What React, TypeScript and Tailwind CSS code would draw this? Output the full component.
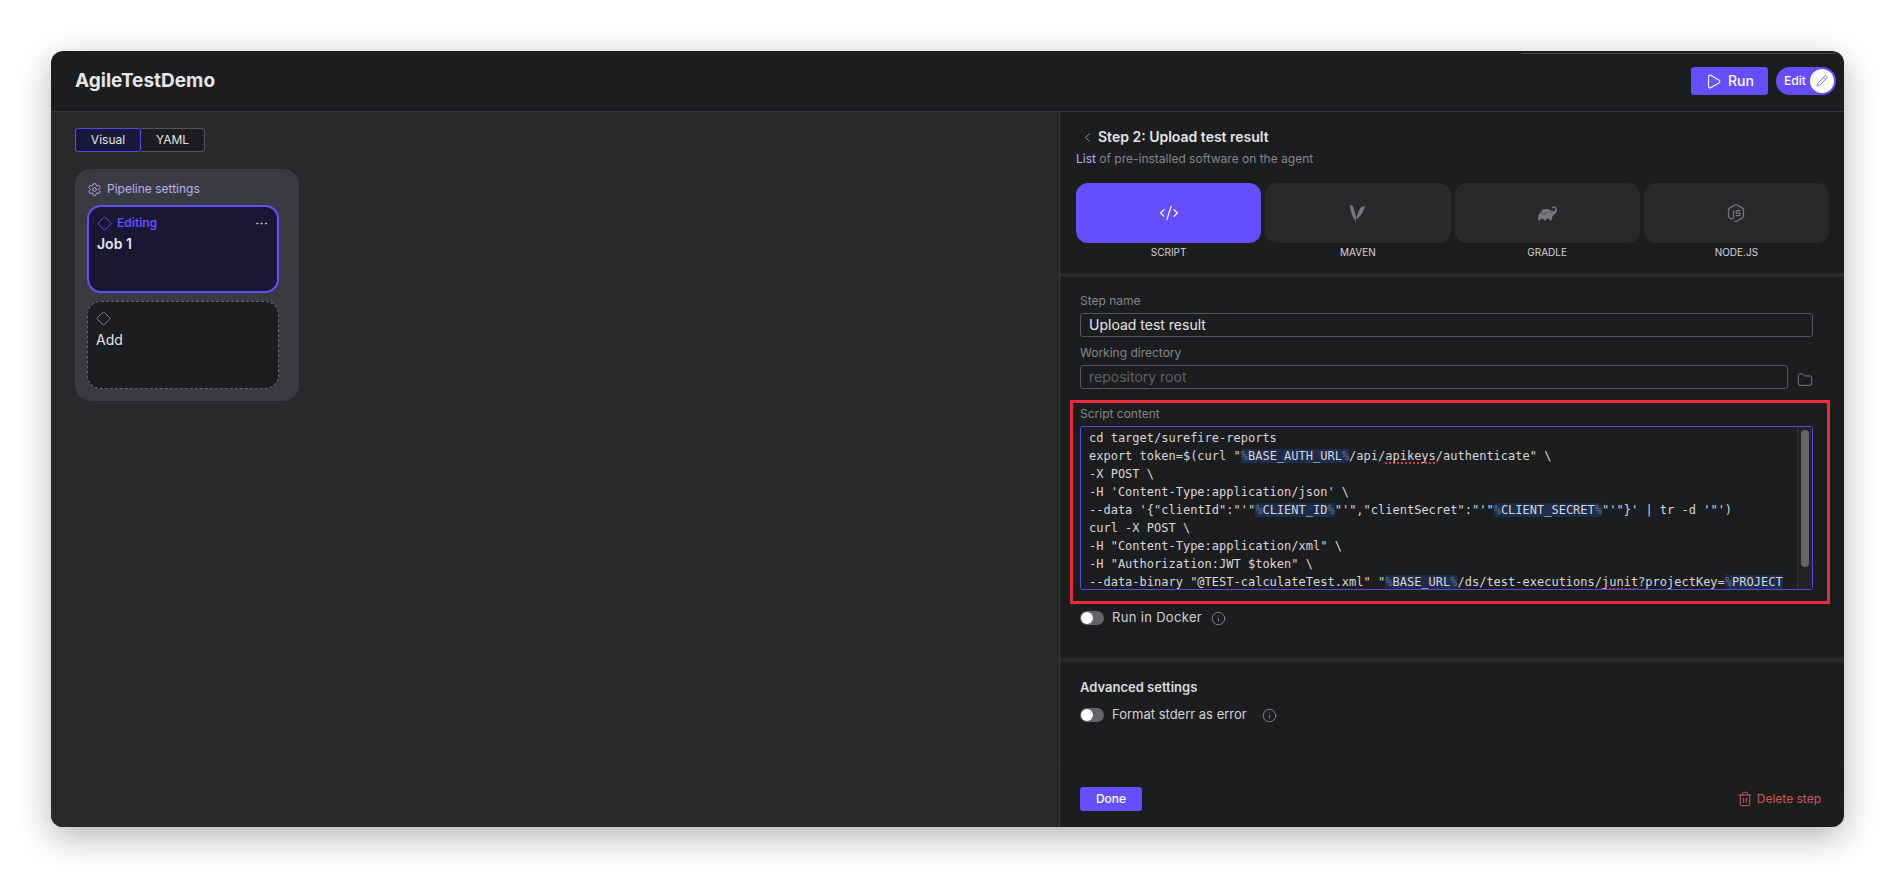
import {ReactNode} from "react";
import {ChevronLeft, CodeXml, Diamond, Ellipsis, Folder, Info, Pencil, Play, Settings, Trash2} from "lucide-react";
import {SiGradle} from "react-icons/si";
import {TbBrandNodejs} from "react-icons/tb";

function MavenIcon() {
  return (
    <svg width="17" height="18" viewBox="0 0 17 18" fill="#77777d">
      <path d="M1 1.5C2.6 1 3.8 1.6 4.4 3.2L7.2 13.5 6.6 16 5 15.6C3 11 1.4 6.5 1 1.5Z" />
      <path d="M15.8 2C14.2 1.8 12.6 2.4 11.3 4.2 9.6 6.8 8.4 10 7.6 13.6L7.4 15.6C11.4 12.6 14.6 8 15.8 2Z" />
      <path d="M6 15.5h1v2.5H6z" opacity="0.5" />
    </svg>
  );
}

function Toggle() {
  return (
    <span className="flex h-[14px] w-[24px] shrink-0 items-center rounded-full bg-[#63646a] pl-[1px]">
      <span className="size-[12px] rounded-full bg-white" />
    </span>
  );
}

function Label({children}: {children: ReactNode}) {
  return <div className="mb-[4px] h-4 text-xs leading-4 text-[#85868b]">{children}</div>;
}

function Var({name}: {name: string}) {
  return (
    <span className="bg-[#1d2d4b]">
      <span className="text-[#5d6f8c]">%</span>
      {name}
      <span className="text-[#5d6f8c]">%</span>
    </span>
  );
}

function Typo({children}: {children: ReactNode}) {
  return <span className="underline decoration-[#d43c3c] decoration-dotted decoration-2 underline-offset-2">{children}</span>;
}

const tabs = [
  {name: "SCRIPT", icon: <CodeXml size={20} strokeWidth={1.5} color="#fff" />, active: true},
  {name: "MAVEN", icon: <MavenIcon />},
  {name: "GRADLE", icon: <SiGradle size={19} color="#77777d" />},
  {name: "NODE.JS", icon: <TbBrandNodejs size={20} color="#77777d" strokeWidth={1.5} />},
];

export default function App() {
  return (
    <div className="h-[877px] w-[1895px] overflow-hidden bg-white pl-[51px] pt-[51px] font-['Inter',sans-serif]">
      <div className="relative flex h-[776px] w-[1793px] flex-col overflow-hidden rounded-[12px] bg-[#1c1d1f] text-[#e4e4e7] shadow-[0_10px_34px_rgba(0,0,0,0.3)]">
        <div className="absolute right-[8px] top-[2px] h-px w-[315px] bg-[#4a4b4f]" />

        <header className="flex h-[61px] shrink-0 items-center justify-between border-b border-[#36373a] pl-[24px] pr-[8px]">
          <h1 className="mt-[1px] text-[19px] font-bold text-[#e6e6e9]">AgileTestDemo</h1>
          <div className="flex items-center gap-2">
            <button className="flex h-[28px] w-[77px] items-center justify-center gap-[6px] rounded-[3px] bg-[#654eff] text-sm font-medium text-white">
              <Play size={17} strokeWidth={1.5} />
              Run
            </button>
            <div className="flex h-[28px] w-[60px] items-center justify-between rounded-full bg-[#654eff] pl-2 pr-[2px] text-xs font-medium text-white">
              Edit
              <span className="flex size-[24px] items-center justify-center rounded-full bg-white">
                <Pencil size={12} strokeWidth={1.5} color="#654eff" />
              </span>
            </div>
          </div>
        </header>

        <div className="flex min-h-0 flex-1">
          <main className="w-[1008px] shrink-0 bg-[#28292b] pl-[24px] pt-[16px]">
            <div className="flex h-[24px] w-[130px] text-xs">
              <button className="w-[66px] rounded-[3px] border border-[#5a45f0] bg-[#19173a] text-[#e4e4e7]">Visual</button>
              <button className="flex-1 rounded-r-[3px] border border-l-0 border-[#55565b] bg-[#1c1d1f] text-[#e4e4e7]">YAML</button>
            </div>

            <div className="mt-[17px] h-[232px] w-[224px] rounded-[16px] bg-[#3a3b40] pl-[12px] pr-[20px] pt-[12px]">
              <div className="flex h-4 items-center gap-[5px] text-xs text-[#b7adf8]">
                <Settings size={15} strokeWidth={1.5} />
                Pipeline settings
              </div>
              <div className="mt-[8px] h-[88px] rounded-[14px] border-2 border-[#654eff] bg-[#191733] pl-[8px] pr-[8px] pt-[8px]">
                <div className="flex items-center justify-between">
                  <div className="flex items-center gap-[5px] text-xs font-semibold text-[#654eff]">
                    <Diamond size={15} strokeWidth={1.5} />
                    Editing
                  </div>
                  <Ellipsis size={15} strokeWidth={1.5} color="#c9c9ce" />
                </div>
                <div className="mt-[3px] text-sm font-semibold leading-5 text-[#e6e6e9]">Job 1</div>
              </div>
              <div className="mt-[8px] h-[88px] rounded-[14px] border border-dashed border-[#66676c] bg-[#1c1d1f] pl-[8px] pt-[9px]">
                <Diamond size={15} strokeWidth={1.25} color="#a0a1a6" />
                <div className="mt-[4px] text-sm leading-5 text-[#e4e4e7]">Add</div>
              </div>
            </div>
          </main>

          <aside className="flex min-w-0 flex-1 flex-col border-l border-[#36373a]">
            <section className="h-[161px] shrink-0 pl-[16px] pr-[15px] pt-[15px]">
              <div className="flex h-5 items-center gap-[3px] pl-[4px] text-sm font-semibold text-[#e4e4e7]">
                <ChevronLeft size={15} strokeWidth={1.5} color="#9a9ba0" />
                Step 2: Upload test result
              </div>
              <p className="mt-[2px] text-xs leading-5 text-[#85868b]">
                <span className="text-[#b7adf8]">List</span> of pre-installed software on the agent
              </p>
              <div className="mt-[14px] grid grid-cols-4 gap-[4px]">
                {tabs.map((tab) => (
                  <div key={tab.name} className="flex flex-col items-center">
                    <div className={`flex h-[60px] w-full items-center justify-center rounded-[12px] ${tab.active ? "bg-[#654eff]" : "bg-[#28292b]"}`}>
                      {tab.icon}
                    </div>
                    <div className="mt-[1px] text-[10px] leading-4 text-[#d4d4d8]">{tab.name}</div>
                  </div>
                ))}
              </div>
            </section>

            <div className="h-[4px] shrink-0 bg-[#28292b]" />

            <section className="h-[381px] shrink-0 pl-[20px] pr-[31px] pt-[16px]">
              <Label>Step name</Label>
              <div className="flex h-[24px] items-center rounded-[3px] border border-[#55565b] px-2 text-sm text-[#e8e8ea]">Upload test result</div>
              <div className="mt-[8px]" />
              <Label>Working directory</Label>
              <div className="flex items-center gap-[9px]">
                <div className="flex h-[24px] flex-1 items-center rounded-[3px] border border-[#55565b] px-2 text-sm text-[#5f6065]">repository root</div>
                <Folder size={16} strokeWidth={1.25} color="#8a8b90" className="mt-[5px]" />
              </div>

              <div className="-ml-[10px] -mr-[17px] mt-[11px] h-[204px] border-[3px] border-[#ee2a3c] pb-[11px] pl-[7px] pr-[14px] pt-[3px]">
                <Label>Script content</Label>
                <div className="flex h-[164px] overflow-hidden rounded-[3px] border border-[#5a45f0]">
                  <pre className="min-w-0 flex-1 overflow-hidden whitespace-pre pl-2 pt-[2px] font-['DejaVu_Sans_Mono',monospace] text-xs leading-[18px] text-[#d8d8db]">
                    <div>cd target/surefire-reports</div>
                    <div>export token=$(curl "<Var name="BASE_AUTH_URL" />/api/<Typo>apikeys</Typo>/authenticate" \</div>
                    <div>-X POST \</div>
                    <div>-H 'Content-Type:application/json' \</div>
                    <div>--data '{"{"}"clientId":"'"<Var name="CLIENT_ID" />"'","clientSecret":"'"<Var name="CLIENT_SECRET" />"'"{"}"}' | tr -d '"')</div>
                    <div>curl -X POST \</div>
                    <div>-H "Content-Type:application/xml" \</div>
                    <div>-H "Authorization:JWT $token" \</div>
                    <div>--data-binary "@TEST-calculateTest.xml" "<Var name="BASE_URL" />/ds/test-executions/<Typo>junit</Typo>?projectKey=<span className="bg-[#1d2d4b]"><span className="text-[#5d6f8c]">%</span>PROJECT</span></div>
                  </pre>
                  <div className="w-[15px] shrink-0 border-l border-[#333438] bg-[#222325] pl-[3px] pt-[3px]">
                    <div className="h-[137px] w-[8px] rounded-full bg-[#646566]" />
                  </div>
                </div>
              </div>

              <div className="mt-[6px] flex h-4 items-center gap-2 text-[13px] tracking-wide text-[#d4d4d8]">
                <Toggle />
                Run in Docker
                <Info size={15} strokeWidth={1.25} color="#9a9ba0" className="ml-[1px]" />
              </div>
            </section>

            <div className="h-[4px] shrink-0 bg-[#28292b]" />

            <section className="min-h-0 flex-1 pl-[20px] pt-[17px]">
              <h3 className="text-[13px] font-semibold leading-4 text-[#dcdce0]">Advanced settings</h3>
              <div className="mt-[12px] flex h-4 items-center gap-2 text-[13px] text-[#d4d4d8]">
                <Toggle />
                Format stderr as error
                <Info size={15} strokeWidth={1.25} color="#9a9ba0" className="ml-[7px]" />
              </div>
            </section>

            <footer className="flex h-[61px] shrink-0 items-center justify-between border-t border-[#1f2022] pl-[20px] pr-[23px] pt-[4px]">
              <button className="h-[24px] w-[62px] rounded-[3px] bg-[#654eff] text-xs font-medium text-white">Done</button>
              <div className="flex items-center gap-[4px] text-xs text-[#c95a5a]">
                <Trash2 size={16} strokeWidth={1.5} />
                Delete step
              </div>
            </footer>
          </aside>
        </div>
      </div>
    </div>
  );
}
